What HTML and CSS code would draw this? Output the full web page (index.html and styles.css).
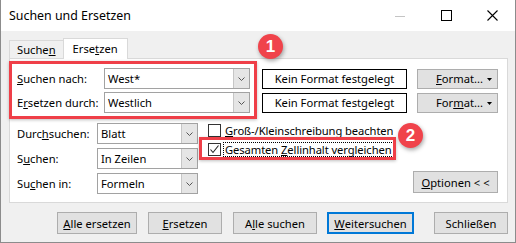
FILE: index.html
```html
<!DOCTYPE html>
<html lang="de">
<head>
  <meta charset="UTF-8">
  <title>Suchen und Ersetzen</title>
  <link rel="stylesheet" href="styles.css">
</head>
<body>
  <div class="window">
    <div class="titlebar">
      <span class="title">Suchen und Ersetzen</span>
      <div class="controls">
        <div class="ctrl">
          <svg width="10" height="10" viewBox="0 0 10 10"><line x1="0" y1="5.5" x2="10" y2="5.5" stroke="#c4c4c4" stroke-width="1"/></svg>
        </div>
        <div class="ctrl">
          <svg width="11" height="11" viewBox="0 0 11 11"><rect x="0.5" y="0.5" width="10" height="10" fill="none" stroke="#000" stroke-width="1"/></svg>
        </div>
        <div class="ctrl">
          <svg width="11" height="11" viewBox="0 0 11 11"><path d="M0.5 0.5 L10.5 10.5 M10.5 0.5 L0.5 10.5" stroke="#000" stroke-width="1.1"/></svg>
        </div>
      </div>
    </div>

    <div class="client">
      <div class="tabs">
        <div class="tab">Suche<u>n</u></div>
        <div class="tab active">Erse<u>t</u>zen</div>
      </div>

      <div class="panel">
        <div class="row">
          <span class="label label-top"><u>S</u>uchen nach:</span>
          <div class="combo combo-top">
            <span class="value">West*</span>
            <span class="drop"><svg width="7" height="4" viewBox="0 0 7 4"><polyline points="0.5,0.5 3.5,3.5 6.5,0.5" fill="none" stroke="#555" stroke-width="1"/></svg></span>
          </div>
          <div class="format-box">Kein Format festgelegt</div>
          <div class="btn format-btn"><span><u>F</u>ormat...</span><svg class="tri" width="5" height="3" viewBox="0 0 5 3"><polygon points="0,0 5,0 2.5,3" fill="#000"/></svg></div>
        </div>
        <div class="row">
          <span class="label label-top">E<u>r</u>setzen durch:</span>
          <div class="combo combo-top">
            <span class="value">Westlich</span>
            <span class="drop"><svg width="7" height="4" viewBox="0 0 7 4"><polyline points="0.5,0.5 3.5,3.5 6.5,0.5" fill="none" stroke="#555" stroke-width="1"/></svg></span>
          </div>
          <div class="format-box">Kein Format festgelegt</div>
          <div class="btn format-btn"><span>For<u>m</u>at...</span><svg class="tri" width="5" height="3" viewBox="0 0 5 3"><polygon points="0,0 5,0 2.5,3" fill="#000"/></svg></div>
        </div>

        <div class="lower">
          <div class="search-opts">
            <div class="row">
              <span class="label label-low">Durc<u>h</u>suchen:</span>
              <div class="combo combo-low">
                <span class="value">Blatt</span>
                <span class="drop"><svg width="7" height="4" viewBox="0 0 7 4"><polyline points="0.5,0.5 3.5,3.5 6.5,0.5" fill="none" stroke="#555" stroke-width="1"/></svg></span>
              </div>
            </div>
            <div class="row">
              <span class="label label-low">S<u>u</u>chen:</span>
              <div class="combo combo-low">
                <span class="value">In Zeilen</span>
                <span class="drop"><svg width="7" height="4" viewBox="0 0 7 4"><polyline points="0.5,0.5 3.5,3.5 6.5,0.5" fill="none" stroke="#555" stroke-width="1"/></svg></span>
              </div>
            </div>
            <div class="row">
              <span class="label label-low">Su<u>c</u>hen in:</span>
              <div class="combo combo-low">
                <span class="value">Formeln</span>
                <span class="drop"><svg width="7" height="4" viewBox="0 0 7 4"><polyline points="0.5,0.5 3.5,3.5 6.5,0.5" fill="none" stroke="#555" stroke-width="1"/></svg></span>
              </div>
            </div>
          </div>

          <div class="checks">
            <div class="check">
              <span class="checkbox"></span>
              <span class="check-text"><u>G</u>roß-/Kleinschreibung beachten</span>
            </div>
            <div class="check">
              <span class="checkbox"><svg width="11" height="11" viewBox="0 0 11 11"><polyline points="1.5,5.5 4,8.5 9.5,1.5" fill="none" stroke="#222" stroke-width="1.1"/></svg></span>
              <span class="check-text focused">Gesamten <u>Z</u>ellinhalt vergleichen</span>
            </div>
          </div>

          <div class="btn options-btn"><u>O</u>ptionen &lt; &lt;</div>
        </div>
      </div>

      <div class="actions">
        <div class="btn act-1"><u>A</u>lle ersetzen</div>
        <div class="btn act-2"><u>E</u>rsetzen</div>
        <div class="btn act-3">A<u>l</u>le suchen</div>
        <div class="btn act-4 default"><u>W</u>eitersuchen</div>
        <div class="btn act-5">Schließen</div>
      </div>
    </div>

    <div class="mark mark-1"></div>
    <div class="mark mark-2"></div>
    <div class="badge badge-1">1</div>
    <div class="badge badge-2">2</div>
  </div>
</body>
</html>
```

FILE: styles.css
```css
* {
  box-sizing: border-box;
}

body {
  margin: 0;
  font-family: 'Noto Sans', 'Liberation Sans', sans-serif;
  font-size: 11.2px;
  color: #000;
  background: #fff;
}

u {
  text-decoration: underline;
  text-underline-offset: 1px;
}

.window {
  position: relative;
  width: 516px;
  height: 243px;
  background: #f0f0f0;
  border: 1px solid #8c8c8c;
  border-top: none;
}

.titlebar {
  height: 31px;
  display: flex;
  align-items: center;
  background: #fff;
}

.title {
  padding-left: 8px;
  font-size: 12.4px;
}

.controls {
  margin-left: auto;
  display: flex;
}

.ctrl {
  width: 46px;
  height: 31px;
  display: flex;
  align-items: center;
  justify-content: center;
}

.client {
  padding: 7px 0 0 8px;
}

.tabs {
  display: flex;
  align-items: flex-end;
  height: 20px;
}

.tab {
  height: 18px;
  padding: 0 7px;
  line-height: 17px;
  border: 1px solid #d9d9d9;
  border-right: none;
  border-bottom: none;
}

.tab.active {
  position: relative;
  z-index: 1;
  height: 21px;
  margin-bottom: -1px;
  padding: 0 9px;
  line-height: 19px;
  background: #fff;
  border-right: 1px solid #d9d9d9;
}

.panel {
  width: 499px;
  height: 145px;
  padding: 9px 0 0 7px;
  background: #fff;
  border: 1px solid #d9d9d9;
}

.row {
  display: flex;
  align-items: center;
  height: 21px;
}

.row + .row {
  margin-top: 3px;
}

.label-top {
  width: 87px;
}

.label-low {
  width: 80px;
}

.combo {
  display: flex;
  height: 21px;
  border: 1px solid #a2a2a2;
  background: #fff;
}

.combo-top {
  width: 146px;
}

.combo-low {
  width: 101px;
}

.combo .value {
  flex: 1;
  padding-left: 3px;
  line-height: 19px;
}

.combo .drop {
  width: 16px;
  display: flex;
  align-items: center;
  justify-content: center;
  background: #e5e5e5;
  border-left: 1px solid #c6c6c6;
}

.format-box {
  width: 145px;
  height: 20px;
  margin-left: 12px;
  border: 1px solid #000;
  text-align: center;
  line-height: 18px;
}

.btn {
  display: flex;
  align-items: center;
  justify-content: center;
  height: 22px;
  background: #e1e1e1;
  border: 1px solid #adadad;
}

.format-btn {
  position: relative;
  width: 81px;
  height: 20px;
  margin-left: 10px;
  padding-left: 4px;
}

.format-btn .tri {
  position: absolute;
  right: 5px;
  top: 8px;
}

.lower {
  display: flex;
  margin-top: 10px;
}

.search-opts .row + .row {
  margin-top: 4px;
}

.checks {
  margin-left: 10px;
}

.check {
  display: flex;
  align-items: center;
  height: 15px;
}

.check + .check {
  margin-top: 4px;
}

.checkbox {
  width: 13px;
  height: 13px;
  margin-right: 2px;
  display: flex;
  align-items: center;
  justify-content: center;
  background: #fff;
  border: 1px solid #333;
}

.check-text {
  padding: 0 1px;
  line-height: 13px;
  letter-spacing: -0.08px;
  border: 1px dotted transparent;
}

.check-text.focused {
  border-color: #000;
}

.options-btn {
  width: 85px;
  margin-left: auto;
  margin-right: 9px;
  margin-bottom: 1px;
  align-self: flex-end;
}

.actions {
  display: flex;
  margin-top: 9px;
  padding-left: 48px;
}

.act-1 { width: 80px; }
.act-2 { width: 74px; margin-left: 11px; }
.act-3 { width: 84px; margin-left: 11px; }
.act-4 { width: 87px; margin-left: 10px; }
.act-5 { width: 74px; margin-left: 20px; }

.btn.default {
  border: 2px solid #0078d7;
}

.mark {
  position: absolute;
  border: 3px solid #ef3f48;
  box-shadow: 0 1px 3px rgba(0, 0, 0, 0.25);
}

.mark-1 {
  left: 8px;
  top: 61px;
  width: 248px;
  height: 58px;
}

.mark-2 {
  left: 198px;
  top: 137px;
  width: 197px;
  height: 23px;
}

.badge {
  position: absolute;
  width: 25px;
  height: 25px;
  border-radius: 50%;
  background: #f0434b;
  color: #fff;
  font-family: 'Liberation Sans', sans-serif;
  font-size: 17px;
  font-weight: bold;
  line-height: 25px;
  text-align: center;
  box-shadow: 1px 2px 4px rgba(0, 0, 0, 0.35);
}

.badge-1 {
  left: 257px;
  top: 34px;
}

.badge-2 {
  left: 397px;
  top: 123px;
}
```
